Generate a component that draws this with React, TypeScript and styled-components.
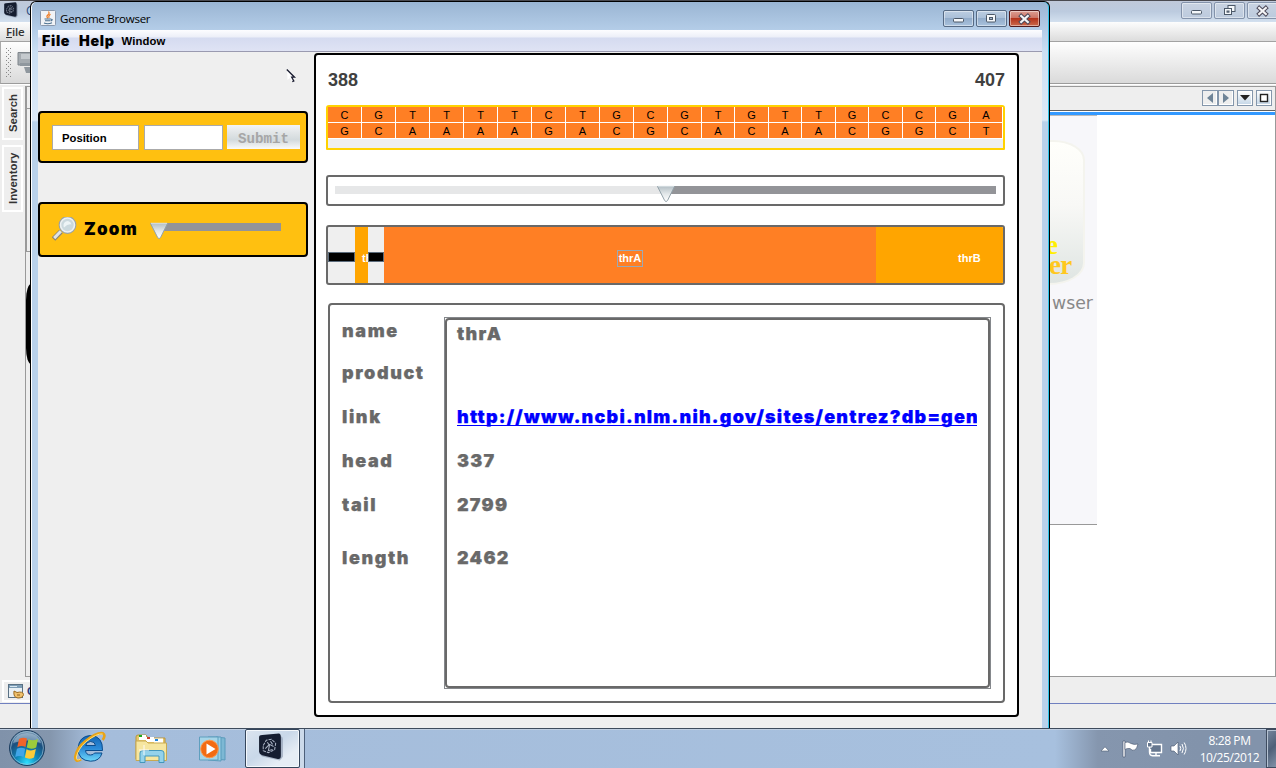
import React from 'react';
import styled, { createGlobalStyle, css } from 'styled-components';

const Global = createGlobalStyle`
  * { box-sizing: border-box; }
  html, body { margin: 0; padding: 0; overflow: hidden; }
  body { font-family: "Liberation Sans", sans-serif; font-size: 11px; color: #000; }
  svg { display: block; flex: none; }
`;

const Desktop = styled.div`
  position: relative;
  width: 1276px;
  height: 768px;
  overflow: hidden;
  display: flex;
  flex-direction: column;
  background: #eee;
`;

/* ---------- window behind ---------- */

const BackWindow = styled.div`
  height: 728px;
  display: flex;
  flex-direction: column;
  background: #eee;
`;
const BackTitle = styled.div`
  height: 22px;
  flex: none;
  display: flex;
  align-items: flex-start;
  justify-content: space-between;
  padding: 1px 0 0 3px;
  border-top: 1px solid #4a4a50;
  background: linear-gradient(#c0c9da, #bccbdf 50%, #d3e0ef);
`;
const BackName = styled.div`
  flex: 1;
  padding-left: 7px;
  font: 12px/17px "Open Sans", sans-serif;
  color: #2c4c80;
`;
const BackButtons = styled.div`
  display: flex;
  gap: 2px;
  margin-right: -2px;
`;
const CaptionButton = styled.div<{ $tone?: 'close' | 'dim' }>`
  width: 31px;
  height: 17px;
  display: flex;
  align-items: center;
  justify-content: center;
  border: 1px solid #566a84;
  border-radius: 2px;
  box-shadow: inset 0 0 0 1px rgba(255, 255, 255, 0.45);
  background: linear-gradient(#bccde1 0, #a9bfd8 48%, #92acca 50%, #a9c2dd 100%);
  ${(p) => p.$tone === 'dim' && css`
    border-color: #8493ab;
    background: linear-gradient(#c9d3e2, #bccadd);
  `}
  ${(p) => p.$tone === 'close' && css`
    border-color: #501a1c;
    background: linear-gradient(#dc9d92 0, #cd7465 46%, #b4331c 50%, #cb6a4c 100%);
  `}
`;
const BackMenu = styled.div`
  height: 20px;
  flex: none;
  padding: 2px 6px 0;
  font: 600 11.5px/16px "Open Sans", sans-serif;
  letter-spacing: -0.2px;
  color: #333;
  border-bottom: 1px solid #a2a2a2;
  background: linear-gradient(#fdfdfd, #dcdcdc);
`;
const BackTools = styled.div`
  height: 42px;
  flex: none;
  display: flex;
  align-items: center;
  gap: 5px;
  padding-left: 5px;
  border-bottom: 1px solid #9c9c9c;
  border-left: 1px solid #aaa;
  background: linear-gradient(#fefefe, #dadada);
`;
const Grip = styled.div`
  width: 6px;
  height: 30px;
  background-image: conic-gradient(from 270deg at 1px 1px, #888 90deg, transparent 0), conic-gradient(from 270deg at 1px 1px, #888 90deg, transparent 0);
  background-size: 4px 4px;
  background-position: 0 0, 2px 2px;
`;
const BackBody = styled.div`
  height: 593px;
  flex: none;
  display: flex;
  padding-top: 1px;
  border-top: 1px solid #fff;
`;
const SideTabs = styled.div`
  width: 25px;
  display: flex;
  flex-direction: column;
  gap: 5px;
  padding: 1px 2px 0;
`;
const SideTab = styled.div<{ $h: number }>`
  height: ${(p) => p.$h}px;
  display: flex;
  align-items: center;
  justify-content: center;
  border: 2px solid #fff;
  font: bold 11.4px/16px "Liberation Sans", sans-serif;
  color: #333;
  writing-mode: vertical-rl;
  transform: rotate(180deg);
`;
const Editor = styled.div`
  flex: 1;
  display: flex;
  border: 1px solid #999;
`;
const EditorMain = styled.div`
  flex: 1;
  display: flex;
  flex-direction: column;
`;
const TabStrip = styled.div`
  height: 23px;
  flex: none;
  display: flex;
  justify-content: flex-end;
  align-items: center;
  gap: 3px;
  padding-right: 3px;
`;
const NavPair = styled.div`
  display: flex;
`;
const NavButton = styled.div<{ $lit?: boolean }>`
  width: 16px;
  height: 16px;
  margin-top: -1px;
  display: flex;
  align-items: center;
  justify-content: center;
  border: 1px solid #8496ab;
  box-shadow: inset -1px -1px 0 #fff;
  background: ${(p) => (p.$lit ? 'linear-gradient(#fff, #c3d5e6)' : '#eee')};
`;
const ActiveLine = styled.div`
  height: 5px;
  flex: none;
  border-top: 1px solid #606060;
  border-bottom: 3px solid #3399ff;
  background: #fff;
`;
const Page = styled.div`
  flex: 1;
  display: flex;
  justify-content: flex-end;
  background: #fff;
`;
const PageLeft = styled.div`
  width: 5px;
  display: flex;
  flex-direction: column;
  background: #eee;
`;
const InnerBox = styled.div<{ $h: number }>`
  height: ${(p) => p.$h}px;
  border: 1px solid #999;
  border-right: 0;
  border-top: 0;
`;
const DarkShape = styled.div`
  height: 80px;
  margin-top: 32px;
  background: #000;
  border-radius: 5px 0 0 5px / 16px 0 0 16px;
`;
const Splash = styled.div`
  width: 60px;
  height: 410px;
  margin-right: 178px;
  padding: 24px 0 0;
  border-top: 1px solid #bbb;
  border-bottom: 1px solid #999;
  background: #f7f7fa;
`;
const Badge = styled.div`
  width: 48px;
  height: 145px;
  padding: 93px 0 0 9px;
  border: 2px solid #f4f4ee;
  border-left: 0;
  border-radius: 0 32px 36px 0 / 0 20px 22px 0;
  background: linear-gradient(#fffffb, #f8f8f6 45%, #dfe5e2);
  font: bold 27px/20px "Liberation Serif", serif;
  letter-spacing: -0.8px;
  color: #ffc81e;
`;
const BadgeTop = styled.div`
  height: 20px;
  color: #ffee00;
`;
const BadgeLow = styled.div`
  height: 21px;
  padding-left: 3px;
`;
const SplashName = styled.div`
  padding: 6px 0 0 15px;
  font: 17.3px/24px "DejaVu Sans", sans-serif;
  color: #888;
`;
const OutputBar = styled.div`
  height: 27px;
  flex: none;
  padding: 3px 2px 1px;
  display: flex;
  border-bottom: 1px solid #7080c0;
`;
const OutputTab = styled.div`
  width: 60px;
  display: flex;
  align-items: center;
  gap: 3px;
  padding-left: 4px;
  border: 2px solid #fff;
  font: bold 11.5px "Liberation Sans", sans-serif;
  color: #2c3c80;
`;

/* ---------- Genome Browser window ---------- */

const Front = styled.div`
  position: absolute;
  left: 30px;
  top: 1px;
  width: 1020px;
  height: 727px;
  display: flex;
  flex-direction: column;
  border: 1px solid #000;
  border-bottom: 0;
  border-radius: 6px 6px 0 0;
  padding: 0 7px 0 7px;
  box-shadow: inset 1px 0 0 #fff, inset -1px 0 0 #2fc4e8;
  background: linear-gradient(#9ab5d3 0, #b4cde8 28px, #cbdff3 50px, #dce9f7 118px, #b9d1ea 120px);
`;
const FrontTitle = styled.div`
  height: 28px;
  flex: none;
  display: flex;
  align-items: flex-start;
  padding: 8px 2px 0 2px;
`;
const TitleText = styled.div`
  flex: 1;
  padding: 1px 0 0 4px;
  font: 11.6px/16px "Open Sans", sans-serif;
  letter-spacing: -0.28px;
`;
const CaptionGroup = styled.div`
  display: flex;
  gap: 2px;
`;
const MenuBar = styled.div`
  height: 22px;
  flex: none;
  display: flex;
  align-items: center;
  padding-left: 4px;
  border-bottom: 1px solid #9a9ab0;
  background: linear-gradient(#fdfdff 0, #eceff8 7px, #d5dbf0 8px, #dfe3f4 100%);
`;
const MenuItem = styled.div<{ $small?: boolean }>`
  font: 900 14.3px/18px Inter, "DejaVu Sans", sans-serif;
  letter-spacing: 0.65px;
  margin-right: 9px;
  ${(p) => p.$small && css`
    font: bold 11.3px/18px "Liberation Sans", sans-serif;
    letter-spacing: 0.1px;
    margin-left: -2px;
  `}
`;
const Client = styled.div`
  flex: 1;
  display: flex;
  gap: 6px;
  padding-top: 1px;
  background: #efefef;
`;
const Controls = styled.div`
  width: 270px;
  display: flex;
  flex-direction: column;
  gap: 39px;
  padding-top: 58px;
`;
const Card = styled.div<{ $h: number }>`
  height: ${(p) => p.$h}px;
  display: flex;
  align-items: center;
  padding: 0 6px 0 12px;
  border: 2px solid #000;
  border-radius: 4px;
  background: #ffc010;
`;
const Field = styled.div<{ $w: number }>`
  width: ${(p) => p.$w}px;
  height: 25px;
  margin-right: ${(p) => (p.$w > 80 ? 5 : 4)}px;
  padding-left: 9px;
  border: 1px solid #aaa;
  background: #fff;
  font: bold 11.3px/24px "Liberation Sans", sans-serif;
`;
const Submit = styled.div`
  width: 73px;
  height: 24px;
  text-align: center;
  color: #a6a6a6;
  font: bold 14.2px/28px "Liberation Mono", monospace;
  background: linear-gradient(#f2f4f5 0, #e0e4e6 35%, #d3dadd 62%, #fafafa 100%);
`;
const ZoomLabel = styled.div`
  width: 81px;
  padding: 0 0 1px 6px;
  font: 900 17px/20px Inter, "DejaVu Sans", sans-serif;
  letter-spacing: 1.2px;
`;
const ZoomSlider = styled.div`
  display: flex;
  margin-bottom: 5px;
`;
const Track = styled.div<{ $grow?: boolean; $light?: boolean }>`
  height: 8px;
  width: 122px;
  background: ${(p) => (p.$light ? '#e6e7e8' : '#939498')};
  ${(p) => p.$grow && css`flex: 1; width: auto;`}
`;
const ThumbSlot = styled.div`
  width: 0;
  height: 8px;
  display: flex;
  justify-content: center;
  align-items: flex-start;
  z-index: 1;
  & > svg { margin-top: -1px; }
`;
const Main = styled.div`
  width: 705px;
  height: 664px;
  padding: 13px 12px 0 10px;
  border: 2px solid #000;
  border-radius: 4px;
  background: #fff;
  display: flex;
  flex-direction: column;
`;
const Range = styled.div`
  height: 37px;
  display: flex;
  justify-content: space-between;
  padding: 0 0 0 2px;
  font: bold 18px/24px "Liberation Sans", sans-serif;
  color: #404040;
`;
const Sequence = styled.div`
  height: 45px;
  flex: none;
  border: 2px solid #ffd200;
  border-radius: 3px 3px 1px 1px;
  background: #efefef;
`;
const Bases = styled.div`
  height: 16px;
  display: grid;
  grid-template-rows: 16px;
  grid-template-columns: repeat(11, 34px) 33px 34px 33px 34px 33px 34px 33px 34px 33px;
`;
const Base = styled.div`
  border-right: 1px solid #fff;
  border-bottom: 1px solid #fff;
  background: #ff7f24;
  text-align: center;
  font: 11px/16px "Liberation Sans", sans-serif;
`;
const SliderBox = styled.div`
  height: 31px;
  flex: none;
  margin-top: 25px;
  display: flex;
  align-items: center;
  padding: 0 7px 1px;
  border: 2px solid #696969;
  border-radius: 3px;
`;
const GeneMap = styled.div`
  height: 60px;
  flex: none;
  margin-top: 19px;
  display: flex;
  align-items: center;
  border: 2px solid #696969;
  border-radius: 3px;
  background: #efefef;
  overflow: hidden;
`;
const Gap = styled.div<{ $w: number }>`
  width: ${(p) => p.$w}px;
  height: 10px;
  margin-top: 3px;
  border: 1px solid #5c6c7c;
  background: #000;
`;
const Gene = styled.div<{ $w: number; $main?: boolean; $pad?: number }>`
  width: ${(p) => p.$w}px;
  height: 56px;
  display: flex;
  align-items: center;
  justify-content: ${(p) => (p.$main ? 'center' : 'flex-start')};
  padding: 6px 0 0 ${(p) => p.$pad ?? 0}px;
  overflow: hidden;
  background: ${(p) => (p.$main ? '#ff7f24' : '#ffa500')};
  color: #fff;
  font: bold 11px/15px "Liberation Sans", sans-serif;
`;
const Selected = styled.span`
  width: 26px;
  display: flex;
  justify-content: center;
  border: 1px solid #9aa9b6;
  white-space: nowrap;
`;
const Details = styled.div`
  height: 400px;
  flex: none;
  margin: 18px 0 0 2px;
  display: flex;
  padding: 12px;
  border: 2px solid #696969;
  border-radius: 4px;
`;
const detailText = css`
  font: 900 18px/22px Inter, "DejaVu Sans", sans-serif;
  -webkit-text-stroke: 0.25px currentColor;
  letter-spacing: 1.22px;
  color: #696969;
  white-space: nowrap;
`;
const Column = styled.div`
  width: 102px;
  padding-top: 3px;
  display: grid;
  align-content: start;
  grid-template-rows: 42px 44px 44px 44px 53px 30px;
  ${detailText}
  letter-spacing: 1.6px;
`;
const Frame = styled.div`
  width: 547px;
  height: 372px;
  border: 1px solid #85888c;
`;
const Values = styled.div`
  height: 370px;
  padding: 3px 11px 0 10px;
  border: 2px solid #696969;
  border-radius: 4px;
  display: grid;
  grid-template-rows: 39px 44px 44px 44px 53px 30px;
  align-content: start;
  ${detailText}
`;
const Link = styled.div`
  overflow: hidden;
  color: #00f;
  text-decoration: underline;
  text-decoration-thickness: 1px;
  text-underline-offset: 2px;
  text-decoration-skip-ink: none;
`;
const Pointer = styled.div`
  position: absolute;
  left: 255px;
  top: 67px;
`;

/* ---------- taskbar ---------- */

const Taskbar = styled.div`
  height: 40px;
  display: flex;
  border-top: 1px solid #3e4b5c;
  box-shadow: inset 0 1px 0 #c0cfe2;
  background: linear-gradient(90deg, #8092aa 0, #8496ad 50px, #a5bddb 92px, #a7c0de 1055px, #8596ae 1098px, #8293ab 1200px);
`;
const Launch = styled.div<{ $w: number; $pad: number; $top?: number }>`
  width: ${(p) => p.$w}px;
  padding: ${(p) => p.$top ?? 0}px 0 0 ${(p) => p.$pad}px;
`;
const TaskButton = styled.div`
  width: 55px;
  height: 39px;
  padding: 3px 0 0 11px;
  border: 1px solid #35465c;
  border-radius: 2px;
  box-shadow: inset 0 0 0 1px #f4f8fc;
  background: linear-gradient(145deg, #dbe4ef, #c9d8e9 45%, #e6edf5 75%);
`;
const TaskEdge = styled.div`
  width: 5px;
  border-right: 1px solid #4d607a;
  background: #ccdaea;
`;
const Tray = styled.div`
  margin-left: auto;
  display: flex;
  align-items: center;
`;
const TrayIcons = styled.div`
  display: flex;
  align-items: center;
  gap: 7px;
  padding-right: 12px;
  & > svg:first-child { margin-right: 4px; }
`;
const Clock = styled.div`
  width: 61px;
  text-align: center;
  color: #fff;
  font: 12px/17px "Open Sans", sans-serif;
  letter-spacing: -0.4px;
  white-space: nowrap;
  padding-top: 1px;
`;
const ShowDesktop = styled.div`
  width: 10px;
  height: 39px;
  margin-left: 6px;
  border: 1px solid #3e4c60;
  border-right: 0;
  box-shadow: inset 1px 1px 0 #b5c2d2;
  background: linear-gradient(135deg, #76879e, #4f6078 50%, #8192a8);
`;

/* ---------- drawings ---------- */

const GenomeLogo = ({ size }: { size: number }) => (
  <svg width={size} height={size} viewBox="0 0 27 27">
    <path d="M4 5 L21 3 Q25 3 25 6 V23 L22 26.5 L6 23 Q3 22 3 19Z" fill="#8593a8" opacity=".6" />
    <path d="M2 4 Q2 2 5 2 L21 .5 Q23 .5 23 4 V22 Q23 25.500 20 25 L5 21.500 Q2 20 2 18Z" fill="#151d30" />
    <g fill="none" stroke="#aab3c4" strokeWidth="1">
      <path d="M6 12 L9 7 L14 6 L18 10 L17 16 L11 19 L6 17Z" strokeDasharray="3 1" />
      <path d="M8 15 L12 11 L16 13 M10 9 L12 12 L11 17 L15 16 M13 8 L15 11" />
    </g>
  </svg>
);

const MinGlyph = () => (
  <svg width="13" height="11"><rect x="1.5" y="5.5" width="10" height="3.5" rx="1" fill="#f4f7fa" stroke="#4c5868" /></svg>
);
const MaxGlyph = () => (
  <svg width="13" height="11">
    <rect x="1.5" y="1.5" width="9" height="7.5" rx="1" fill="#f4f7fa" stroke="#4c5868" />
    <rect x="4.5" y="4.5" width="3" height="2" fill="#a2b7cf" stroke="#4c5868" />
  </svg>
);
const RestoreGlyph = () => (
  <svg width="14" height="13" fill="#f4f7fa" stroke="#4c5868">
    <rect x="5" y="1.5" width="7" height="6" />
    <rect x="1.5" y="4.5" width="7" height="6" />
    <rect x="4" y="7" width="2" height="1.2" fill="#bccadd" />
  </svg>
);
const CloseGlyph = () => (
  <svg width="13" height="12">
    <path d="M3.2 3 L9.8 9 M9.8 3 L3.2 9" stroke="#4c4858" strokeWidth="4.2" strokeLinecap="square" />
    <path d="M3.2 3 L9.8 9 M9.8 3 L3.2 9" stroke="#f4f4f6" strokeWidth="2.3" strokeLinecap="square" />
  </svg>
);
const JavaIcon = () => (
  <svg width="16" height="16" viewBox="0 0 16 16">
    <rect x=".5" y=".5" width="15" height="15" rx="1" fill="#f1f3f6" stroke="#8a98ac" />
    <path d="M8.5 1.5 Q10 3.5 7.7 5 Q6 6.8 8 8.3 M10.5 4.3 Q8 5.8 9.2 7.7" fill="none" stroke="#ee7a20" strokeWidth="1.2" />
    <path d="M4.5 9 H11 M5 10.8 H10.5 M4 13 Q8 14.5 12 12.8 M11 9.2 Q13.5 9.2 11 11" fill="none" stroke="#4a7090" strokeWidth="1.1" />
  </svg>
);
const Thumb = () => (
  <svg width="20" height="18" viewBox="0 0 20 18">
    <defs>
      <linearGradient id="thumb" x1="0" y1="0" x2="0" y2="1">
        <stop offset="0" stopColor="#b5c0c6" /><stop offset=".5" stopColor="#e3e8ea" /><stop offset="1" stopColor="#fff" />
      </linearGradient>
    </defs>
    <path d="M1.5 1.5 H18.5 L11.5 15.6 Q10 17.6 8.7 15.6Z" fill="url(#thumb)" stroke="#93a2aa" />
    <path d="M2 1.3 H18" stroke="#dfe6e9" />
  </svg>
);
const Magnifier = () => (
  <svg width="26" height="26" viewBox="1.5 1.5 26 26">
    <path d="M10.5 16 L3 23.5" stroke="#8c8574" strokeWidth="5" />
    <path d="M10.3 15.800 L3.7 22.600" stroke="#dfe3e5" strokeWidth="3" />
    <circle cx="17" cy="9.5" r="8" fill="#cbd9de" stroke="#9aa3a6" strokeWidth="1.8" />
    <circle cx="17" cy="9.5" r="7" fill="none" stroke="#eef1f2" strokeWidth="1.6" />
    <path d="M13.5 12 A4.5 4.5 0 0 1 17.5 5.4 Q20.5 6 21 9 Q17.5 8 13.5 12" fill="#edf4f6" />
  </svg>
);
const Printer = () => (
  <svg width="22" height="24" viewBox="0 0 22 24">
    <path d="M1 1.5 H20 V14 H1Z" fill="#a5abb0" stroke="#7e858b" />
    <path d="M4 3 H18 V8 H4Z" fill="#c5cace" />
    <path d="M3 12 H16 V15 H3Z M7 16 H21 V22 H9Z" fill="#8f979e" />
  </svg>
);
const OutputIcon = () => (
  <svg width="16" height="16" viewBox="0 0 16 16">
    <rect x=".5" y="1.5" width="14" height="13" fill="#e9f0f5" stroke="#5a7184" />
    <path d="M1 2 H14 V5 H1Z" fill="#7d9db6" />
    <path d="M2 3.5 H9" stroke="#d9e8f2" />
    <path d="M6 8 L9 9.5 Q15 8 15.5 11.5 Q15 15 10 15 Q5 14.5 6 8Z" fill="#efc06c" stroke="#9a6a20" />
    <path d="M9 12 H12" stroke="#8e6018" />
  </svg>
);
const StartOrb = () => (
  <svg width="38" height="38" viewBox="0 0 38 38">
    <defs>
      <radialGradient id="orb" cx=".5" cy=".92" r=".9">
        <stop offset="0" stopColor="#2fe0ff" /><stop offset=".35" stopColor="#0f86b8" />
        <stop offset=".7" stopColor="#1b4f7e" /><stop offset="1" stopColor="#7d9cb8" />
      </radialGradient>
    </defs>
    <circle cx="19" cy="19" r="17.5" fill="url(#orb)" stroke="#1d3e60" />
    <circle cx="19" cy="19" r="16.4" fill="none" stroke="#a9c9dc" strokeOpacity=".6" />
    <path d="M5 14 Q8 4 19 4 Q30 4 33 14 Q19 9 5 14Z" fill="#c9dbe8" opacity=".45" />
    <path d="M11 10 Q15 7.5 19 9.6 L17.5 18 Q13.5 16 9.3 18.3Z" fill="#f0642b" />
    <path d="M20.4 10.2 Q25 12.5 30 10 L28.2 18.4 Q23.5 21 18.8 18.6Z" fill="#9dcb3c" />
    <path d="M8.9 19.8 Q13 17.7 17.2 19.7 L15.5 28 Q11.5 26 7.2 28Z" fill="#42a5e8" />
    <path d="M18.5 20.2 Q23 22.7 27.9 20 L26 28.4 Q21.5 31 16.9 28.6Z" fill="#fdcb38" />
  </svg>
);
const Explorer = () => (
  <svg width="34" height="34" viewBox="0 0 34 34">
    <defs>
      <linearGradient id="ie" x1="0" y1="0" x2="0" y2="1">
        <stop offset="0" stopColor="#1465b4" /><stop offset=".5" stopColor="#2b8ad8" /><stop offset="1" stopColor="#6fd8fa" />
      </linearGradient>
    </defs>
    <path d="M30.5 19.5 H13.5 Q14 24 18.5 24 Q21.5 24 22.5 22 H30 Q28 30.2 18.500 30.2 Q6 29.500 6 17.500 Q7 5 18.500 4.500 Q31 5 30.5 19.5Z M13.7 14.5 H23.5 Q23 10.5 18.6 10.5 Q14.3 10.7 13.7 14.5Z" fill="url(#ie)" stroke="#0b4c8c" fillRule="evenodd" />
    <path d="M9 28.5 Q3 32 3.2 26 Q4.5 17 13.5 10 Q25 1 31 2.3 Q34 4 30.7 9" fill="none" stroke="#e8a317" strokeWidth="2.6" />
    <path d="M8.5 28 Q4 30.5 4.4 26 Q6 18 14 10.8 Q25 2 30.6 3" fill="none" stroke="#ffe27a" strokeWidth="1" />
  </svg>
);
const Folder = () => (
  <svg width="34" height="32" viewBox="0 0 34 32">
    <path d="M2 4 Q2 2 4 2 H12 L14 5 H31 V26 H2Z" fill="#e6c868" stroke="#b89440" />
    <rect x="5" y="2" width="7" height="5" fill="#fff" /><rect x="5" y="2" width="3" height="2" fill="#1eaa1e" />
    <rect x="12" y="4" width="8" height="5" fill="#fff" /><rect x="13" y="4" width="3" height="2" fill="#cc3c28" />
    <rect x="20" y="5.5" width="9" height="5" fill="#fff" /><rect x="21" y="6" width="3" height="2" fill="#2388dd" />
    <path d="M2 8 H12 L14 10 H32.5 V27.5 H2Z" fill="#f6e6a0" stroke="#c8a950" />
    <path d="M6 29.5 V20 Q6 17.5 9 17.5 H27 Q30 17.5 30 20 V29.5 H25 V23 H11 V29.5Z" fill="#94d2ea" stroke="#4397bc" />
    <path d="M10 12 V22 M5 17 H15" stroke="#fff" strokeWidth="1" opacity=".9" />
  </svg>
);
const MediaPlayer = () => (
  <svg width="30" height="30" viewBox="0 0 30 30">
    <path d="M18 4 L27 5 V27 L18 26Z" fill="#7db8d4" stroke="#5a9bbc" />
    <path d="M10 4 L23 4 V28 L10 27Z" fill="#9ad0e6" stroke="#5a9bbc" />
    <path d="M1.5 4 H20 V27 H1.5Z" fill="#a6d5e8" stroke="#5f9fbe" />
    <circle cx="11.5" cy="16" r="8.8" fill="#f36b12" stroke="#fa9a50" />
    <path d="M8.5 10.5 V21.5 L17.5 16Z" fill="#fff" />
  </svg>
);

const TOP = 'CGTTTTCTGCGTGTTGCCGA'.split('');
const BOTTOM = 'GCAAAAGACGCACAACGGCT'.split('');

export default function App() {
  return (
    <>
      <Global />
      <Desktop>
        <BackWindow>
          <BackTitle>
            <GenomeLogo size={16} />
            <BackName>C</BackName>
            <BackButtons>
              <CaptionButton $tone="dim"><MinGlyph /></CaptionButton>
              <CaptionButton $tone="dim"><RestoreGlyph /></CaptionButton>
              <CaptionButton $tone="dim"><CloseGlyph /></CaptionButton>
            </BackButtons>
          </BackTitle>
          <BackMenu><u>F</u>ile</BackMenu>
          <BackTools><Grip /><Printer /></BackTools>
          <BackBody>
            <SideTabs>
              <SideTab $h={53}>Search</SideTab>
              <SideTab $h={67}>Inventory</SideTab>
            </SideTabs>
            <Editor>
              <PageLeft>
                <InnerBox $h={22} />
                <InnerBox $h={143} />
                <DarkShape />
              </PageLeft>
              <EditorMain>
                <TabStrip>
                  <NavPair>
                    <NavButton><svg width="8" height="10"><path d="M7 0 V10 L1 5Z" fill="#6f8497" /></svg></NavButton>
                    <NavButton><svg width="8" height="10"><path d="M1 0 V10 L7 5Z" fill="#6f8497" /></svg></NavButton>
                  </NavPair>
                  <NavButton $lit><svg width="10" height="6"><path d="M0 0 H10 L5 5.5Z" fill="#222" /></svg></NavButton>
                  <NavButton $lit><svg width="10" height="10"><rect x="1.5" y="1.5" width="7" height="7" fill="#fff" stroke="#222" strokeWidth="1.4" /></svg></NavButton>
                </TabStrip>
                <ActiveLine />
                <Page>
                  <Splash>
                    <Badge>
                      <BadgeTop>e</BadgeTop>
                      <BadgeLow>er</BadgeLow>
                    </Badge>
                    <SplashName>wser</SplashName>
                  </Splash>
                </Page>
              </EditorMain>
            </Editor>
          </BackBody>
          <OutputBar><OutputTab><OutputIcon />C</OutputTab></OutputBar>
        </BackWindow>

        <Taskbar>
          <Launch $w={72} $pad={8}><StartOrb /></Launch>
          <Launch $w={62} $pad={0} $top={2}><Explorer /></Launch>
          <Launch $w={63} $pad={0} $top={4}><Folder /></Launch>
          <Launch $w={48} $pad={1} $top={4}><MediaPlayer /></Launch>
          <TaskButton><GenomeLogo size={28} /></TaskButton>
          <TaskEdge />
          <Tray>
            <TrayIcons>
              <svg width="10" height="6"><path d="M1 5 L5 .8 L9 5Z" fill="#fff" stroke="#4e5e74" strokeWidth=".6" /></svg>
              <svg width="18" height="18" fill="#fff" stroke="#43536b" strokeWidth=".6">
                <path d="M2 1 H4 V17 H2Z" /><path d="M4 2.5 Q7 1 10 3.5 Q13 5 17 4 Q16 8 14 10 Q11 11 9 8.5 Q6 8 4 9.5Z" />
              </svg>
              <svg width="17" height="18" fill="none">
                <path d="M6 4.5 H15.5 V12.5 H4.5 V9" fill="#66778f" stroke="#fff" strokeWidth="1.4" />
                <path d="M10 12.5 V15.5 M6.5 15.7 H14 M3.5 7 V12 Q3.5 15.5 6.5 15.7" stroke="#fff" strokeWidth="1.4" />
                <path d="M1.5 2.5 H6 V7 H1.5Z M2.5 .5 V3 M5 .5 V3" fill="#66778f" stroke="#fff" />
              </svg>
              <svg width="17" height="17" fill="none" stroke="#fff">
                <path d="M1 6 H4 L8 2 V15 L4 11 H1Z" fill="#fff" stroke="#43536b" strokeWidth=".6" />
                <path d="M10 6 Q11.5 8.5 10 11 M12 4 Q14.8 8.5 12 13 M14.2 2.5 Q17.8 8.5 14.2 14.5" />
              </svg>
            </TrayIcons>
            <Clock>8:28 PM<br />10/25/2012</Clock>
            <ShowDesktop />
          </Tray>
        </Taskbar>

        <Front>
          <FrontTitle>
            <JavaIcon />
            <TitleText>Genome Browser</TitleText>
            <CaptionGroup>
              <CaptionButton><MinGlyph /></CaptionButton>
              <CaptionButton><MaxGlyph /></CaptionButton>
              <CaptionButton $tone="close"><CloseGlyph /></CaptionButton>
            </CaptionGroup>
          </FrontTitle>
          <MenuBar>
            <MenuItem>File</MenuItem>
            <MenuItem>Help</MenuItem>
            <MenuItem $small>Window</MenuItem>
          </MenuBar>
          <Client>
            <Controls>
              <Card $h={52}>
                <Field $w={87}>Position</Field>
                <Field $w={79} />
                <Submit>Submit</Submit>
              </Card>
              <Card $h={55}>
                <Magnifier />
                <ZoomLabel>Zoom</ZoomLabel>
                <ZoomSlider>
                  <ThumbSlot><Thumb /></ThumbSlot>
                  <Track />
                </ZoomSlider>
              </Card>
            </Controls>
            <Main>
              <Range><span>388</span><span>407</span></Range>
              <Sequence>
                <Bases>{TOP.map((b, i) => <Base key={i}>{b}</Base>)}</Bases>
                <Bases>{BOTTOM.map((b, i) => <Base key={i}>{b}</Base>)}</Bases>
              </Sequence>
              <SliderBox>
                <Track $grow $light />
                <ThumbSlot><Thumb /></ThumbSlot>
                <Track $grow />
              </SliderBox>
              <GeneMap>
                <Gap $w={27} />
                <Gene $w={13} $pad={7}>thrL</Gene>
                <Gap $w={16} />
                <Gene $w={492} $main><Selected>thrA</Selected></Gene>
                <Gene $w={127} $pad={82}>thrB</Gene>
              </GeneMap>
              <Details>
                <Column>
                  <span>name</span><span>product</span><span>link</span>
                  <span>head</span><span>tail</span><span>length</span>
                </Column>
                <Frame>
                  <Values>
                    <span>thrA</span><span />
                    <Link>http://www.ncbi.nlm.nih.gov/sites/entrez?db=gene</Link>
                    <span>337</span><span>2799</span><span>2462</span>
                  </Values>
                </Frame>
              </Details>
            </Main>
          </Client>
          <Pointer>
            <svg width="11" height="14" viewBox="0 0 11 14">
              <path d="M1 .5 L8.5 8 H5.5 L7.5 11.5 L6 12.5 L4 9 L1.5 11" fill="#fff" />
              <path d="M.8 .5 L8.5 8.2 H5.7 L7.8 12 L6.3 12.6" fill="none" stroke="#1a1c30" strokeWidth="1.3" />
            </svg>
          </Pointer>
        </Front>
      </Desktop>
    </>
  );
}
